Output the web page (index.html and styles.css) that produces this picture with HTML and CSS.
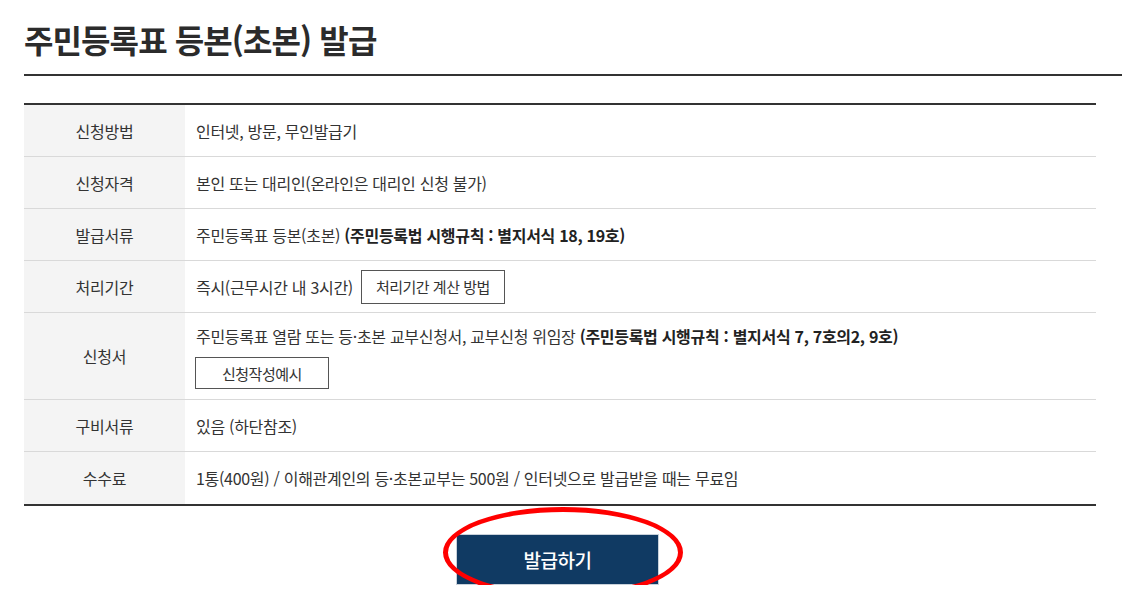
FILE: index.html
```html
<!DOCTYPE html>
<html lang="ko">

<head>
    <meta charset="UTF-8">
    <meta name="viewport" content="width=device-width, initial-scale=1.0">
    <title>주민등록표 등본(초본) 발급</title>
    <link rel="stylesheet" href="styles.css">
</head>

<body>
    <div class="page">
        <h1 class="page-title">주민등록표 등본(초본) 발급</h1>

        <div class="info-table">
            <div class="info-row">
                <div class="info-label">신청방법</div>
                <div class="info-value">인터넷, 방문, 무인발급기</div>
            </div>
            <div class="info-row">
                <div class="info-label">신청자격</div>
                <div class="info-value">본인 또는 대리인(온라인은 대리인 신청 불가)</div>
            </div>
            <div class="info-row">
                <div class="info-label">발급서류</div>
                <div class="info-value"><span>주민등록표 등본(초본) <b>(주민등록법 시행규칙 : 별지서식 18, 19호)</b></span></div>
            </div>
            <div class="info-row">
                <div class="info-label">처리기간</div>
                <div class="info-value">
                    <span>즉시(근무시간 내 3시간)</span>
                    <button class="small-btn">처리기간 계산 방법</button>
                </div>
            </div>
            <div class="info-row">
                <div class="info-label">신청서</div>
                <div class="info-value stacked">
                    <p>주민등록표 열람 또는 등·초본 교부신청서, 교부신청 위임장 <b>(주민등록법 시행규칙 : 별지서식 7, 7호의2, 9호)</b></p>
                    <button class="small-btn">신청작성예시</button>
                </div>
            </div>
            <div class="info-row">
                <div class="info-label">구비서류</div>
                <div class="info-value">있음 (하단참조)</div>
            </div>
            <div class="info-row">
                <div class="info-label">수수료</div>
                <div class="info-value">1통(400원) / 이해관계인의 등·초본교부는 500원 / 인터넷으로 발급받을 때는 무료임</div>
            </div>
        </div>

        <div class="issue-area">
            <div class="issue-wrap">
                <button class="issue-btn">발급하기</button>
                <span class="highlight-ring"></span>
            </div>
        </div>
    </div>
</body>

</html>
```

FILE: styles.css
```css
* {
    margin: 0;
    padding: 0;
    box-sizing: border-box;
}

body {
    background-color: white;
    font-family: "Noto Sans CJK KR", "Noto Sans", sans-serif;
    color: #333;
    overflow: hidden;
}

.page {
    padding-left: 24px;
}

.page-title {
    font-size: 32px;
    font-weight: 700;
    line-height: 40px;
    letter-spacing: -0.9px;
    color: #2b2b2b;
    padding: 19px 0 15px;
    border-bottom: 2px solid #333;
}

.info-table {
    width: 1072px;
    margin-top: 27px;
    border-top: 2px solid #333;
    border-bottom: 2px solid #333;
}

.info-row {
    display: grid;
    grid-template-columns: 161px 1fr;
    min-height: 52px;
    border-bottom: 1px solid #d9d9d9;
}

.info-row:last-child {
    border-bottom: none;
}

.info-label {
    background-color: #f4f4f4;
    display: flex;
    align-items: center;
    justify-content: center;
    font-size: 16px;
    letter-spacing: -0.2px;
    color: #333;
}

.info-value {
    display: flex;
    align-items: center;
    gap: 8px;
    padding-left: 11px;
    font-size: 16px;
    letter-spacing: -0.3px;
    color: #333;
}

.info-value b {
    font-weight: 700;
    color: #222;
}

.info-value.stacked {
    flex-direction: column;
    align-items: flex-start;
    gap: 9px;
    padding-top: 11px;
    padding-bottom: 10px;
}

.info-value.stacked p {
    line-height: 24px;
}

.small-btn {
    font-family: inherit;
    font-size: 15px;
    letter-spacing: -0.5px;
    color: #333;
    background-color: white;
    border: 1px solid #555;
    height: 34px;
    padding: 0 14px;
    cursor: pointer;
}

.info-value.stacked .small-btn {
    height: 32px;
    padding: 0 26px;
    margin-left: -1px;
}

.issue-area {
    width: 1072px;
    display: flex;
    justify-content: center;
    padding-top: 28px;
}

.issue-wrap {
    position: relative;
    margin-right: 5px;
}

.issue-btn {
    font-family: inherit;
    width: 203px;
    height: 51px;
    background-color: #103a63;
    border: 1px solid #c9d1da;
    color: white;
    font-size: 19px;
    font-weight: 500;
    letter-spacing: -0.5px;
    cursor: pointer;
}

.highlight-ring {
    position: absolute;
    left: -13px;
    top: -27px;
    width: 240px;
    height: 91px;
    border: 5px solid #f00;
    border-radius: 50%;
    pointer-events: none;
}
```
